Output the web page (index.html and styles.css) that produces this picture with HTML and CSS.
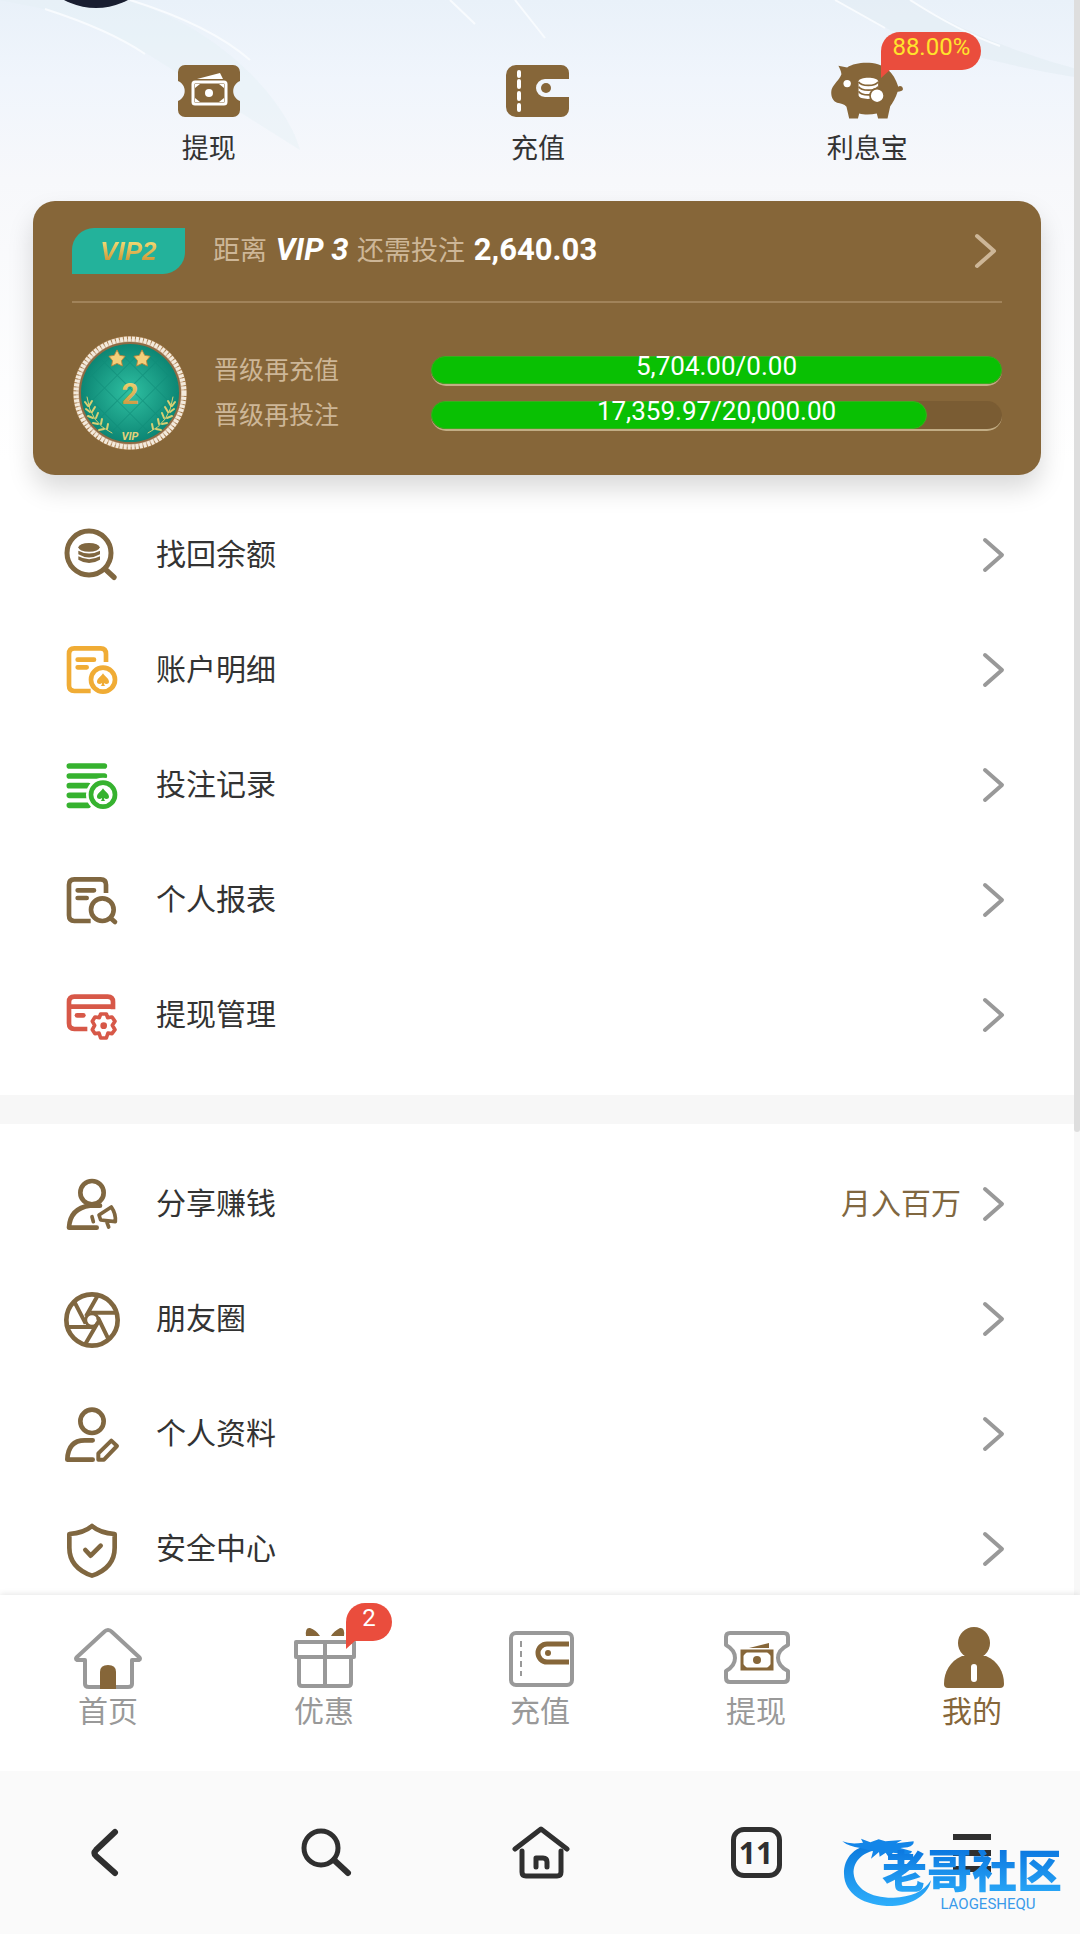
FILE: index.html
```html
<!DOCTYPE html>
<html lang="zh-CN">
<head>
    <meta charset="UTF-8">
    <meta name="viewport" content="width=device-width, initial-scale=1.0">
    <title>我的</title>
    <link rel="stylesheet" href="styles.css">
</head>
<body>

<svg class="defs" aria-hidden="true">
    <symbol id="chevron" viewBox="0 0 24 36">
        <path d="M4 3L21 18L4 33" fill="none" stroke="currentColor" stroke-width="4" stroke-linecap="round" stroke-linejoin="round"/>
    </symbol>
    <symbol id="spade" viewBox="0 0 40 40">
        <path d="M20 1C24 9 38 16 38 26C38 33 29 35 23 30C23 34 24 37 27 39H13C16 37 17 34 17 30C11 35 2 33 2 26C2 16 16 9 20 1Z" fill="currentColor"/>
    </symbol>
    <symbol id="star" viewBox="0 0 20 20">
        <path d="M10 1l3 6 6 1-4 5 1 6-6-3-6 3 1-6-4-5 6-1z" fill="#f3cf7a" stroke="#b9853b" stroke-width="1"/>
    </symbol>
</svg>

<main class="page">
    <svg class="streaks" viewBox="0 0 1080 200" preserveAspectRatio="none" aria-hidden="true">
        <path d="M40 8C90 22 130 42 165 65L300 150C290 110 230 30 125 0H0Z" fill="#e3eff4" opacity=".4"/>
        <path d="M45 9Q110 30 145 54M130 0Q210 25 250 60M450 0L475 24M515 0L545 38" fill="none" stroke="#f8fbfe" stroke-width="2"/>
        <path d="M835 0L890 30Q980 62 1080 78V70Q985 45 910 0Z" fill="#e2edf4" opacity=".6"/>
        <path d="M835 0L885 28M910 0Q960 32 1000 46" fill="none" stroke="#f8fbfe" stroke-width="2"/>
    </svg>
    <div class="avatar"></div>

    <nav class="actions">
        <a class="action" href="#">
            <svg class="action-icon" width="62" height="52" viewBox="0 0 62 52">
                <path d="M7 0H55a7 7 0 0 1 7 7V16c-9 4-9 16 0 20V45a7 7 0 0 1-7 7H7a7 7 0 0 1-7-7V36c9-4 9-16 0-20V7a7 7 0 0 1 7-7Z" fill="#866639"/>
                <path d="M19 14L42 8L45 14Z" fill="#fff"/>
                <rect x="15" y="17" width="33" height="22" rx="2" fill="none" stroke="#fff" stroke-width="3"/>
                <path d="M17 19h5l-5 4zM46 19h-5l5 4zM17 37h5l-5-4zM46 37h-5l5-4z" fill="#fff"/>
                <circle cx="31" cy="28" r="4" fill="#fff"/>
            </svg>
            <span>提现</span>
        </a>
        <a class="action" href="#">
            <svg class="action-icon" width="63" height="52" viewBox="0 0 63 52">
                <path d="M10 0H55a8 8 0 0 1 8 8V14H39a9 9 0 0 0 0 18H63V44a8 8 0 0 1-8 8H10A10 10 0 0 1 0 42V10A10 10 0 0 1 10 0Z" fill="#866639"/>
                <path d="M13 7v4M13 16v6M13 28v6M13 40v5" stroke="#fff" stroke-width="4" stroke-linecap="round"/>
                <circle cx="40" cy="23" r="5" fill="#866639"/>
            </svg>
            <span>充值</span>
        </a>
        <a class="action" href="#">
            <svg class="action-icon" width="72" height="56" viewBox="152 162 214 166">
                <path d="M174 170L200 175C228 157 290 155 320 180C335 192 345 210 352 232C358 228 366 232 366 240C364 246 358 246 350 247C345 265 335 280 328 290L320 327H292L288 312C270 316 250 316 236 312L232 327H206L198 292C192 284 180 282 170 280C155 275 150 255 154 240C162 220 175 215 183 195C182 185 178 178 174 170Z" fill="#866639"/>
                <circle cx="200" cy="223" r="11" fill="#fff"/>
                <path d="M234 216C234 202 292 202 292 216V258C288 272 234 272 234 258Z" fill="#fff"/>
                <path d="M234 218C242 232 284 232 292 218M234 232C242 246 284 246 292 232M234 246C242 260 284 260 292 246" fill="none" stroke="#866639" stroke-width="5"/>
                <circle cx="289" cy="259" r="21" fill="#fff" stroke="#866639" stroke-width="5"/>
            </svg>
            <span>利息宝</span>
            <em class="bubble bubble-rate">88.00%</em>
        </a>
    </nav>

    <section class="vip-card">
        <a class="vip-head" href="#">
            <span class="vip-badge"><b>VIP2</b></span>
            <span class="vip-text">距离 <strong><i>VIP 3</i></strong> 还需投注 <strong>2,640.03</strong></span>
            <svg class="chevron"><use href="#chevron"/></svg>
        </a>
        <div class="vip-body">
            <svg class="medal" viewBox="0 0 116 116">
                <defs>
                    <radialGradient id="felt">
                        <stop offset="0" stop-color="#2fc0a2"/>
                        <stop offset="1" stop-color="#0c8573"/>
                    </radialGradient>
                    <linearGradient id="gold" x2="0" y2="1">
                        <stop offset="0" stop-color="#f2e07c"/>
                        <stop offset="1" stop-color="#c98b35"/>
                    </linearGradient>
                    <pattern id="quilt" width="18" height="18" patternUnits="userSpaceOnUse" patternTransform="rotate(45 58 58)">
                        <path d="M0 0H18M0 0V18" stroke="#0f8b77" stroke-width="2" opacity=".6"/>
                    </pattern>
                </defs>
                <circle cx="58" cy="58" r="57" fill="#a87f50"/>
                <circle cx="58" cy="58" r="54" fill="#c9a98a"/>
                <circle cx="58" cy="58" r="54" fill="none" stroke="#f3eadc" stroke-width="5" stroke-dasharray="3 1"/>
                <circle cx="58" cy="58" r="50" fill="url(#felt)" stroke="#8d6b45" stroke-width="2"/>
                <circle cx="58" cy="58" r="49" fill="url(#quilt)"/>
                <use href="#star" x="36" y="14" width="18" height="18"/>
                <use href="#star" x="61" y="14" width="18" height="18"/>
                <text x="58" y="69" class="medal-num" fill="url(#gold)">2</text>
                <g fill="none" stroke="#d8cf73" stroke-width="1" stroke-linecap="round">
                    <path d="M15 62Q18 88 40 98M101 62Q98 88 76 98"/>
                    <path stroke-width="2" d="M16 71l-3-4M18 77l-4-3M21 83l-5-2M26 89l-5-1M32 94l-5 1M17 71l3-5M20 77l3-5M24 83l2-5M29 89l1-5M35 94l1-5M100 71l3-4M98 77l4-3M95 83l5-2M90 89l5-1M84 94l5 1M99 71l-3-5M96 77l-3-5M92 83l-2-5M87 89l-1-5M81 94l-1-5"/>
                </g>
                <text x="58" y="105" class="medal-vip">VIP</text>
            </svg>
            <div class="levels">
                <div class="level">
                    <span>晋级再充值</span>
                    <div class="bar">
                        <div class="bar-fill" style="width: 100%"></div>
                        <span class="bar-value">5,704.00/0.00</span>
                    </div>
                </div>
                <div class="level">
                    <span>晋级再投注</span>
                    <div class="bar">
                        <div class="bar-fill" style="width: 86.8%"></div>
                        <span class="bar-value">17,359.97/20,000.00</span>
                    </div>
                </div>
            </div>
        </div>
    </section>

    <ul class="menu">
        <li><a class="menu-item" href="#">
            <svg class="menu-icon" viewBox="66 45 180 180">
                <circle cx="147" cy="129" r="66" fill="none" stroke="currentColor" stroke-width="15"/>
                <path d="M196 178L222 202" stroke="currentColor" stroke-width="16" stroke-linecap="round"/>
                <ellipse cx="147" cy="112" rx="32" ry="13" fill="currentColor"/>
                <path d="M115 122Q147 139 180 122V133Q147 152 115 133ZM115 139Q147 156 180 139V149Q147 169 115 149Z" fill="currentColor"/>
            </svg>
            <span>找回余额</span>
            <svg class="chevron"><use href="#chevron"/></svg>
        </a></li>
        <li><a class="menu-item" href="#">
            <svg class="menu-icon icon-orange" viewBox="66 390 180 180">
                <g fill="none" stroke="currentColor" stroke-width="14" stroke-linecap="round">
                    <path stroke-linecap="butt" d="M198 456V432Q198 415 182 415H103Q87 415 87 432V526Q87 543 103 543H152"/>
                    <path d="M113 449H162M113 472H140"/>
                    <circle cx="189" cy="509" r="36"/>
                </g>
                <use href="#spade" x="169" y="489" width="40" height="40"/>
            </svg>
            <span>账户明细</span>
            <svg class="chevron"><use href="#chevron"/></svg>
        </a></li>
        <li><a class="menu-item" href="#">
            <svg class="menu-icon icon-green" viewBox="66 735 180 180">
                <g fill="none" stroke="currentColor" stroke-width="17" stroke-linecap="round">
                    <path d="M88 768H193M88 798H193M88 827H145M88 856H140M88 886H145"/>
                    <circle cx="189" cy="854" r="46" fill="#fff" stroke="#fff" stroke-width="10"/>
                    <circle cx="189" cy="854" r="36" stroke-width="14"/>
                </g>
                <use href="#spade" x="169" y="834" width="40" height="40"/>
            </svg>
            <span>投注记录</span>
            <svg class="chevron"><use href="#chevron"/></svg>
        </a></li>
        <li><a class="menu-item" href="#">
            <svg class="menu-icon" viewBox="66 90 180 180">
                <g fill="none" stroke="currentColor" stroke-width="14" stroke-linecap="round">
                    <path stroke-linecap="butt" d="M198 159V134Q198 118 182 118H103Q87 118 87 134V226Q87 243 103 243H152"/>
                    <path d="M113 151H162M113 174H140M214 236L225 246"/>
                    <circle cx="187" cy="209" r="34"/>
                </g>
            </svg>
            <span>个人报表</span>
            <svg class="chevron"><use href="#chevron"/></svg>
        </a></li>
        <li><a class="menu-item" href="#">
            <svg class="menu-icon icon-red" viewBox="66 435 180 180">
                <g fill="none" stroke="currentColor" stroke-width="14" stroke-linejoin="round">
                    <path d="M219 508V486Q219 470 203 470H103Q87 470 87 486V550Q87 567 103 567H142"/>
                    <path d="M87 500H219"/>
                    <path d="M111 526H130" stroke-linecap="round"/>
                    <path stroke-width="11" d="M182 522H199L203 533L216 531L225 544L217 556L225 569L216 581L204 579L199 594H182L177 579L165 581L157 569L164 556L157 544L165 531L178 533Z"/>
                </g>
                <circle cx="191" cy="557" r="10" fill="currentColor"/>
            </svg>
            <span>提现管理</span>
            <svg class="chevron"><use href="#chevron"/></svg>
        </a></li>
    </ul>

    <ul class="menu">
        <li><a class="menu-item" href="#">
            <svg class="menu-icon" viewBox="66 69 180 180">
                <g fill="none" stroke="currentColor" stroke-width="14" stroke-linecap="round" stroke-linejoin="round">
                    <circle cx="156" cy="125" r="35"/>
                    <path d="M180 164H150Q90 172 87 230H170"/>
                    <path stroke-width="11" d="M177 192L214 168Q228 188 226 212L182 207ZM156 197L160 212M200 212L206 228"/>
                </g>
            </svg>
            <span>分享赚钱</span>
            <em class="menu-note">月入百万</em>
            <svg class="chevron"><use href="#chevron"/></svg>
        </a></li>
        <li><a class="menu-item" href="#">
            <svg class="menu-icon" viewBox="66 414 180 180">
                <g fill="none" stroke="currentColor" stroke-width="12">
                    <circle cx="156" cy="507" r="77" stroke-width="14"/>
                    <circle cx="156" cy="507" r="19" stroke-width="9"/>
                    <path d="M172 436L138 496M228 485H152M206 566L174 500M136 579L174 514M84 528H158M104 454L137 518"/>
                </g>
            </svg>
            <span>朋友圈</span>
            <svg class="chevron"><use href="#chevron"/></svg>
        </a></li>
        <li><a class="menu-item" href="#">
            <svg class="menu-icon" viewBox="66 759 180 180">
                <g fill="none" stroke="currentColor" stroke-width="14" stroke-linecap="round" stroke-linejoin="round">
                    <circle cx="156" cy="811" r="35"/>
                    <path d="M158 868H134Q84 868 82 926H158"/>
                    <path stroke-width="12" d="M214 869L231 885L192 926H175V907Z"/>
                </g>
            </svg>
            <span>个人资料</span>
            <svg class="chevron"><use href="#chevron"/></svg>
        </a></li>
        <li><a class="menu-item" href="#">
            <svg class="menu-icon" viewBox="66 1104 180 180">
                <g fill="none" stroke="currentColor" stroke-width="14" stroke-linecap="round" stroke-linejoin="round">
                    <path d="M156 1125Q180 1146 224 1149V1190Q224 1250 156 1274Q88 1250 88 1190V1149Q132 1146 156 1125Z"/>
                    <path d="M136 1197L152 1214L182 1184"/>
                </g>
            </svg>
            <span>安全中心</span>
            <svg class="chevron"><use href="#chevron"/></svg>
        </a></li>
    </ul>

    <div class="scrollbar"><div class="scrollbar-thumb"></div></div>
</main>

<nav class="tabbar">
    <a class="tab" href="#">
        <svg class="tab-icon" viewBox="0 0 72 66">
            <path d="M13 34H5Q3 33 5 31L32 6Q36 2 40 6L67 31Q69 33 67 34H60V58Q60 61 56 61H17Q13 61 13 58Z" fill="none" stroke="#999" stroke-width="4" stroke-linejoin="round"/>
            <path d="M28 63V46Q28 39 36 39T44 46V63Z" fill="#866639"/>
        </svg>
        <span>首页</span>
    </a>
    <a class="tab" href="#">
        <svg class="tab-icon" viewBox="0 0 72 66">
            <path d="M8 16H66V31H8ZM11 31V57Q11 60 14 60H60Q63 60 63 57V31M37 16V60" fill="none" stroke="#999" stroke-width="4" stroke-linejoin="round"/>
            <path d="M18 10Q17 1 22 2Q28 4 32 10ZM56 10Q57 1 52 2Q46 5 43 10Z" fill="#866639"/>
        </svg>
        <span>优惠</span>
        <em class="bubble bubble-count">2</em>
    </a>
    <a class="tab" href="#">
        <svg class="tab-icon" viewBox="0 0 72 66">
            <rect x="7" y="7" width="61" height="52" rx="5" fill="none" stroke="#999" stroke-width="4"/>
            <path d="M17 15V50" stroke="#999" stroke-width="2" stroke-dasharray="6 4"/>
            <path d="M65 18H43A9 9 0 0 0 43 36H65" fill="none" stroke="#866639" stroke-width="5"/>
            <circle cx="44" cy="27" r="3" fill="#866639"/>
        </svg>
        <span>充值</span>
    </a>
    <a class="tab" href="#">
        <svg class="tab-icon" viewBox="0 0 72 66">
            <path d="M10 7H64Q68 7 68 11V19Q58 24 58 32T68 45V52Q68 56 64 56H10Q6 56 6 52V45Q15 40 15 32T6 19V11Q6 7 10 7Z" fill="none" stroke="#999" stroke-width="4" stroke-linejoin="round"/>
            <path d="M29 22L49 17V22Z" fill="#866639"/>
            <rect x="22" y="25" width="30" height="18" fill="none" stroke="#866639" stroke-width="3"/>
            <path d="M23 26h4l-4 4zM51 26h-4l4 4zM23 42h4l-4-4zM51 42h-4l4-4z" fill="#866639"/>
            <circle cx="37" cy="34" r="4" fill="#866639"/>
        </svg>
        <span>提现</span>
    </a>
    <a class="tab active" href="#">
        <svg class="tab-icon" viewBox="0 0 72 66">
            <circle cx="38" cy="17" r="16" fill="#866639"/>
            <path d="M26 30H50C62 35 68 46 68 58Q68 62 64 62H12Q8 62 8 58C8 46 14 35 26 30Z" fill="#866639"/>
            <path d="M38 41V53" stroke="#fff" stroke-width="6" stroke-linecap="round"/>
        </svg>
        <span>我的</span>
    </a>
</nav>

<footer class="browser-bar">
    <button type="button" aria-label="后退">
        <svg width="60" height="60" viewBox="0 0 60 60"><path d="M37 9L18 27Q15 30 18 33L37 50" fill="none" stroke="currentColor" stroke-width="6" stroke-linecap="round"/></svg>
    </button>
    <button type="button" aria-label="搜索">
        <svg width="60" height="60" viewBox="0 0 60 60"><circle cx="27" cy="25" r="17" fill="none" stroke="currentColor" stroke-width="5"/><path d="M40 37L54 50" stroke="currentColor" stroke-width="6" stroke-linecap="round"/></svg>
    </button>
    <button type="button" aria-label="主页">
        <svg width="60" height="60" viewBox="0 0 60 60">
            <g fill="none" stroke="currentColor" stroke-width="5" stroke-linecap="round" stroke-linejoin="round"><path d="M5 26L31 6L57 26"/><path d="M12 28V49Q12 53 16 53H47Q51 53 51 49V28"/><path d="M26 44V35H33Q37 35 37 39V44"/></g>
        </svg>
    </button>
    <button type="button" aria-label="标签页"><span class="tab-count">11</span></button>
    <button type="button" aria-label="菜单">
        <svg width="60" height="60" viewBox="0 0 60 60"><path d="M11 14H49M11 30H49M11 46H49" stroke="currentColor" stroke-width="6"/></svg>
    </button>

    <div class="watermark">
        <svg class="watermark-mark" viewBox="65 85 276 210" aria-hidden="true">
            <defs>
                <linearGradient id="water" x2="0" y2="1">
                    <stop offset="0" stop-color="#0a78dc"/>
                    <stop offset="1" stop-color="#2eaefb"/>
                </linearGradient>
            </defs>
            <path d="M180 105C100 105 70 150 71 195C72 255 130 292 215 292C280 290 325 255 332 215C310 250 270 266 220 267C150 268 105 240 100 195C98 160 125 125 190 122Z" fill="url(#water)"/>
            <path d="M66 98Q90 108 128 102L122 90L150 101L175 92L195 98L245 94L228 104L280 98Q282 110 262 116L240 118L275 128Q272 140 250 136L218 132L205 146L196 132L178 144L176 130L152 150L158 128L120 118Q85 114 66 98Z" fill="#1285e8"/>
        </svg>
        <div class="watermark-words">
            <span class="watermark-name">老哥社区</span>
            <span class="watermark-latin">LAOGESHEQU</span>
        </div>
    </div>
</footer>

</body>
</html>
```
FILE: styles.css
```css
* {
    box-sizing: border-box;
}
body {
    font-family: Roboto, "Noto Sans CJK SC", sans-serif;
    background-color: #fff;
    color: #333;
    margin: 0;
    height: 100vh;
    display: flex;
    flex-direction: column;
}
a {
    color: inherit;
    text-decoration: none;
}
em {
    font-style: normal;
}
svg {
    display: block;
    flex: none;
}
.defs {
    position: absolute;
    width: 0;
    height: 0;
}
.page {
    position: relative;
    flex: 1;
    min-height: 0;
    overflow: hidden;
    padding-right: 6px;
    background: linear-gradient(#e9f1f9 0, #f0f5fc 80px, #f7f8fb 180px, #fff 460px);
}
.streaks {
    position: absolute;
    top: 0;
    left: 0;
    width: 100%;
    height: 200px;
}
.avatar {
    position: absolute;
    top: -128px;
    left: 28px;
    width: 136px;
    height: 136px;
    border-radius: 50%;
    background-color: #191e30;
}

/* shortcuts */
.actions {
    position: relative;
    display: grid;
    grid-template-columns: repeat(3, 1fr);
    padding: 61px 42px 36px 44px;
}
.action {
    position: relative;
    display: flex;
    flex-direction: column;
    align-items: center;
    font-size: 27px;
    line-height: 32px;
}
.action-icon {
    height: 60px;
    margin-bottom: 12px;
}
.bubble {
    position: absolute;
    height: 38px;
    border-radius: 19px 19px 19px 0;
    background-color: #ea4d3d;
    text-align: center;
    font-size: 24px;
    line-height: 30px;
}
.bubble::after {
    content: "";
    position: absolute;
    left: 0;
    top: 37px;
    border-top: 9px solid #ea4d3d;
    border-right: 10px solid transparent;
}
.bubble-rate {
    top: -29px;
    left: calc(50% + 14px);
    width: 100px;
    color: #ffe32c;
}
.bubble-count {
    top: 8px;
    left: calc(50% + 22px);
    width: 46px;
    color: #fff;
}

/* vip card */
.vip-card {
    position: relative;
    margin: 0 33px 23px;
    padding: 26px 39px 24px;
    border-radius: 22px;
    background-color: #866639;
    box-shadow: 0 14px 26px rgba(0, 0, 0, 0.15);
    color: #cdb697;
}
.vip-head {
    display: flex;
    align-items: center;
    padding-bottom: 27px;
    border-bottom: 2px solid #a1835a;
    font-size: 27px;
    line-height: 46px;
}
.vip-badge {
    width: 113px;
    height: 46px;
    margin-right: 28px;
    border-radius: 22px 0 22px 0;
    background-color: #23b29b;
    text-align: center;
}
.vip-badge b {
    font-family: "Liberation Sans", sans-serif;
    font-style: italic;
    font-size: 26px;
    background: linear-gradient(#f0d873 20%, #cf9a3c 80%);
    background-clip: text;
    -webkit-background-clip: text;
    color: transparent;
}
.vip-text strong {
    margin: 0 2px;
    font-size: 31px;
    color: #fff;
}
.chevron {
    width: 24px;
    height: 36px;
    margin-left: auto;
}
.vip-head .chevron {
    margin-right: 5px;
}
.vip-body {
    display: flex;
    gap: 26px;
    padding-top: 32px;
}
.medal {
    width: 116px;
    height: 116px;
}
.medal-num {
    font-size: 30px;
    font-weight: bold;
    text-anchor: middle;
}
.medal-vip {
    font-size: 11px;
    font-weight: bold;
    font-style: italic;
    text-anchor: middle;
    fill: #e6d27a;
}
.levels {
    flex: 1;
    display: grid;
    align-content: center;
    gap: 15px;
}
.level {
    display: grid;
    grid-template-columns: 217px 1fr;
    align-items: center;
    font-size: 25px;
    line-height: 30px;
}
.bar {
    position: relative;
    height: 30px;
    border-radius: 15px;
    border-bottom: 2px solid #c2ad85;
    background-color: #7a5c33;
}
.bar-fill {
    height: 28px;
    border-radius: 14px;
    background-color: #09c003;
    border: 1px solid #3aad1e;
}
.bar-value {
    position: absolute;
    top: -5px;
    left: 0;
    width: 100%;
    text-align: center;
    font-size: 26px;
    line-height: 30px;
    color: #fff;
}

/* menu lists */
.menu {
    position: relative;
    list-style: none;
    margin: 0;
    padding: 0 0 22px;
}
.menu + .menu {
    border-top: 29px solid #f7f7f7;
    padding-top: 23px;
}
.menu-item {
    display: flex;
    align-items: center;
    height: 115px;
    padding: 0 69px 2px 62px;
    font-size: 30px;
    line-height: 34px;
}
.menu-icon {
    width: 60px;
    height: 60px;
    margin-right: 34px;
    color: #806740;
}
.icon-orange {
    color: #f0ac35;
}
.icon-green {
    color: #36b22f;
}
.icon-red {
    color: #d75848;
}
.menu-item .chevron {
    color: #999;
}
.menu-note {
    margin-left: auto;
    color: #806740;
}
.menu-note + .chevron {
    margin-left: 20px;
}

.scrollbar {
    position: absolute;
    top: 0;
    right: 0;
    width: 6px;
    height: 100%;
    background-color: #f8f8f8;
}
.scrollbar-thumb {
    height: 71%;
    border-radius: 0 0 3px 3px;
    background-color: #dedede;
}

/* bottom tabs */
.tabbar {
    position: relative;
    display: grid;
    grid-template-columns: repeat(5, 1fr);
    height: 176px;
    background-color: #fff;
    box-shadow: 0 -1px 6px rgba(0, 0, 0, 0.1);
}
.tab {
    position: relative;
    display: flex;
    flex-direction: column;
    align-items: center;
    padding-top: 31px;
    font-size: 30px;
    line-height: 34px;
    color: #999;
}
.tab-icon {
    width: 72px;
    height: 66px;
    margin-bottom: 3px;
}
.tab.active {
    color: #866639;
}

/* browser toolbar */
.browser-bar {
    position: relative;
    display: grid;
    grid-template-columns: repeat(5, 1fr);
    align-items: center;
    height: 163px;
    background-color: #fafafa;
}
.browser-bar button {
    display: flex;
    justify-content: center;
    padding: 0;
    border: none;
    background: none;
    color: #2f2f2f;
    cursor: pointer;
}
.tab-count {
    width: 51px;
    height: 51px;
    border: 5px solid #2f2f2f;
    border-radius: 13px;
    font: bold 30px/41px "Noto Sans", sans-serif;
}
.watermark {
    position: absolute;
    right: 18px;
    bottom: 22px;
    display: flex;
}
.watermark-mark {
    width: 92px;
    height: 70px;
    margin-right: -52px;
}
.watermark-words {
    display: flex;
    flex-direction: column;
    align-items: center;
    padding-top: 13px;
}
.watermark-name {
    font-size: 45px;
    font-weight: 900;
    line-height: 46px;
    background: linear-gradient(#0c78e0, #2aa9f8);
    background-clip: text;
    -webkit-background-clip: text;
    color: transparent;
}
.watermark-latin {
    padding-left: 32px;
    font-size: 15px;
    line-height: 16px;
    color: #3a9bea;
}
```
